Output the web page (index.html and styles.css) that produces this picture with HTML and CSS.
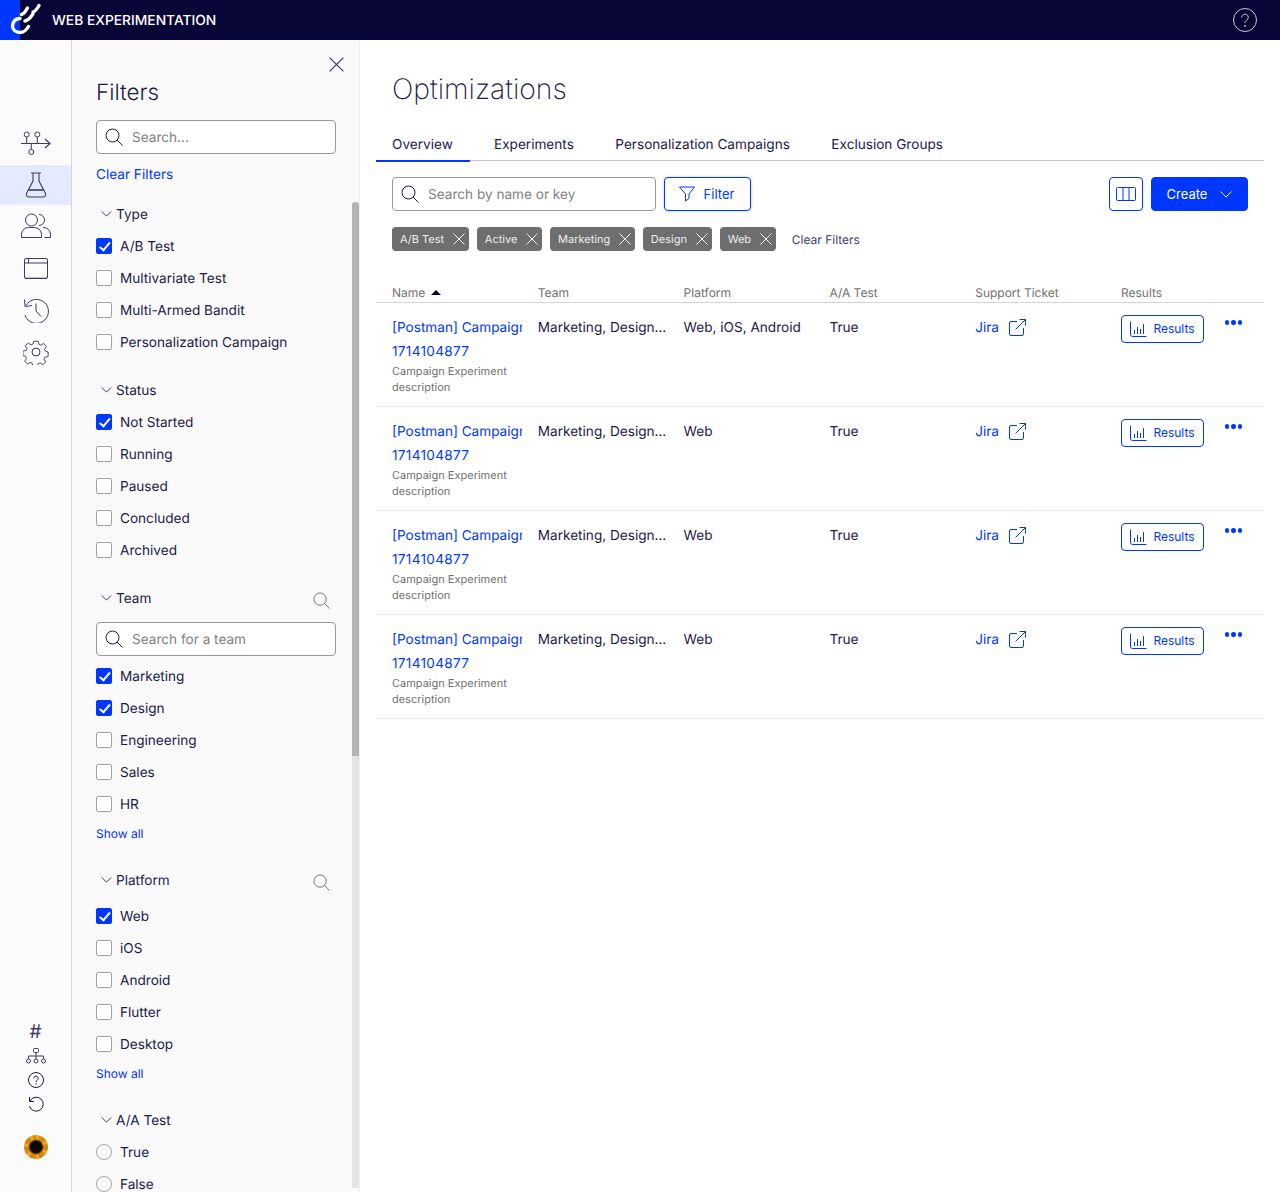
FILE: index.html
```html
<!DOCTYPE html>
<html lang="en">
<head>
  <meta charset="UTF-8">
  <title>Optimizations</title>
  <link rel="stylesheet" href="styles.css">
</head>
<body>
  <svg class="sprites" width="0" height="0">
    <symbol id="i-search" viewBox="0 0 18 18"><circle cx="7.5" cy="7.5" r="6.5" fill="none" stroke="currentColor"/><path d="M12 12l5.5 5.5" fill="none" stroke="currentColor"/></symbol>
    <symbol id="i-x" viewBox="0 0 12 12"><path d="M.5.5l11 11M11.5.5l-11 11" fill="none" stroke="currentColor"/></symbol>
    <symbol id="i-chev" viewBox="0 0 12 7"><path d="M.5.5L6 6l5.5-5.5" fill="none" stroke="currentColor"/></symbol>
    <symbol id="i-ext" viewBox="0 0 17 17"><path d="M8 2.5H2A1.5 1.5 0 0 0 .5 4v11A1.5 1.5 0 0 0 2 16.500h11a1.500 1.500 0 0 0 1.500-1.500V9M6.500 10.500L16.500.5M10.500.5h6v6" fill="none" stroke="currentColor"/></symbol>
    <symbol id="i-chart" viewBox="0 0 17 16"><path d="M.5.5v13a2 2 0 0 0 2 2h14M4.500 9v4M7.500 6v7M10.500 8v5M13.500 3v10" fill="none" stroke="currentColor"/></symbol>
  </svg>

  <header class="topbar">
    <div class="logo-tile"></div>
    <svg class="logo" width="48" height="40" viewBox="0 0 48 40"><g fill="none" stroke="#fff" stroke-linecap="round" stroke-width="3.400"><path d="M20 18.500C14.500 18.500 12.500 23 12.500 26c0 4 3.500 6.500 7.500 6.500 4.500 0 7-3.500 8.500-6"/><path d="M21.500 14.500C25 13.500 26 10 27.500 8"/><path d="M25 21c4-.5 6-4.500 8-7"/><path d="M33 12c3-1 4.500-4 6-6.500"/></g></svg>
    <span class="product-name">WEB EXPERIMENTATION</span>
    <svg class="topbar-help" width="24" height="24" viewBox="0 0 24 24"><circle cx="12" cy="12" r="11.500" fill="none" stroke="#c9c9d4"/><path d="M8.700 9.500a3.300 3.300 0 1 1 5 2.800c-1 .7-1.700 1.300-1.700 2.700" fill="none" stroke="#c9c9d4"/><circle cx="12" cy="18" r=".9" fill="#c9c9d4"/></svg>
  </header>

  <div class="shell">
    <nav class="rail">
      <div class="rail-top">
        <a class="rail-item">
          <svg width="30" height="26" viewBox="0 0 30 26"><g fill="none" stroke="#3c3b63"><path d="M0 12.500h29M24 8l5 4.500-5 4.500" stroke-width="1.200"/><circle cx="5.700" cy="3.500" r="2.500"/><circle cx="16.300" cy="3.500" r="2.500"/><circle cx="10.300" cy="21" r="2.500"/><path d="M5.700 6v6.500M16.300 6v6.500M10.300 12.500v6"/></g></svg>
        </a>
        <a class="rail-item is-active">
          <svg width="22" height="26" viewBox="0 0 22 26"><g fill="none" stroke="#3c3b63" stroke-width="1.100"><path d="M6 1h10M8 1v8L1.500 21.500A2.500 2.500 0 0 0 4 25h14a2.500 2.500 0 0 0 2.500-3.500L14 9V1"/><path d="M3.500 18h15" stroke-width="1.600"/></g></svg>
        </a>
        <a class="rail-item">
          <svg width="30" height="26" viewBox="0 0 30 26"><g fill="none" stroke="#3c3b63"><circle cx="10.500" cy="7" r="6"/><path d="M.5 24.500v-3a7 7 0 0 1 7-7h6a7 7 0 0 1 7 7v3z"/><path d="M18 1.500a5.500 5.500 0 0 1 0 11M22 14.500a7 7 0 0 1 7.500 7v3h-6"/></g></svg>
        </a>
        <a class="rail-item">
          <svg width="24" height="22" viewBox="0 -1 24 22"><g fill="none" stroke="#3c3b63"><rect x=".5" y=".5" width="23" height="20" rx="1.500"/><path d="M.5 5h23M4.500.5V5"/><path d="M1 20.500h22" stroke-width="1.600"/></g></svg>
        </a>
        <a class="rail-item">
          <svg width="26" height="26" viewBox="0 0 26 26"><g fill="none" stroke="#3c3b63"><path d="M3 8.500A12 12 0 1 1 2 18"/><path d="M1.500 2.500l.5 7 7-1"/><path d="M13 6.500V14l5 5.500"/></g></svg>
        </a>
        <a class="rail-item">
          <svg width="26" height="26" viewBox="0 0 26 26"><g fill="none" stroke="#3c3b63"><circle cx="13" cy="13" r="4"/><path d="M10.500 1h5l.7 3.500 2.300 1 3-2 3 3.500-2 3 1 2.300 3 .7v5l-3.500.7-1 2.300 2 3-3.500 3-3-2-2.300 1-.7 3h-5l-.7-3.500-2.300-1-3 2-3-3.500 2-3-1-2.300-3-.7v-5l3.500-.7 1-2.300-2-3 3.500-3 3 2 2.300-1z" transform="translate(1.300 1.300) scale(.9)"/></g></svg>
        </a>
      </div>
      <div class="rail-bottom">
        <span class="rail-hash">#</span>
        <svg width="20" height="16" viewBox="0 0 20 16"><g fill="none" stroke="#3c3b63"><rect x="7.500" y=".5" width="5" height="4" rx="1"/><path d="M10 4.500V8M2.500 11V8h15v3M10 8v3"/><circle cx="2.500" cy="13" r="2"/><circle cx="10" cy="13" r="2"/><circle cx="17.500" cy="13" r="2"/></g></svg>
        <svg width="16" height="16" viewBox="0 0 16 16"><circle cx="8" cy="8" r="7.500" fill="none" stroke="#1b1a48"/><path d="M5.800 6.300a2.200 2.200 0 1 1 3.400 1.900c-.8.500-1.200.9-1.200 1.900" fill="none" stroke="#1b1a48"/><circle cx="8" cy="12" r=".7" fill="#1b1a48"/></svg>
        <svg width="16" height="16" viewBox="0 0 16 16"><path d="M2 5a7 7 0 1 1-.5 5M1.500 1v4.500H6" fill="none" stroke="#1b1a48"/></svg>
        <div class="avatar"></div>
      </div>
    </nav>

    <aside class="filters">
      <svg class="filters-close"><use href="#i-x"/></svg>
      <h2 class="filters-title">Filters</h2>
      <div class="search-box"><svg class="search-icon"><use href="#i-search"/></svg><span>Search...</span></div>
      <a class="clear-link">Clear Filters</a>

      <section class="group">
        <h3 class="group-head"><svg class="chev"><use href="#i-chev"/></svg>Type</h3>
        <label class="opt"><i class="check on"></i>A/B Test</label>
        <label class="opt"><i class="check"></i>Multivariate Test</label>
        <label class="opt"><i class="check"></i>Multi-Armed Bandit</label>
        <label class="opt"><i class="check"></i>Personalization Campaign</label>
      </section>

      <section class="group">
        <h3 class="group-head"><svg class="chev"><use href="#i-chev"/></svg>Status</h3>
        <label class="opt"><i class="check on"></i>Not Started</label>
        <label class="opt"><i class="check"></i>Running</label>
        <label class="opt"><i class="check"></i>Paused</label>
        <label class="opt"><i class="check"></i>Concluded</label>
        <label class="opt"><i class="check"></i>Archived</label>
      </section>

      <section class="group">
        <h3 class="group-head"><svg class="chev"><use href="#i-chev"/></svg>Team<svg class="head-search"><use href="#i-search"/></svg></h3>
        <div class="search-box team-search"><svg class="search-icon"><use href="#i-search"/></svg><span>Search for a team</span></div>
        <label class="opt"><i class="check on"></i>Marketing</label>
        <label class="opt"><i class="check on"></i>Design</label>
        <label class="opt"><i class="check"></i>Engineering</label>
        <label class="opt"><i class="check"></i>Sales</label>
        <label class="opt"><i class="check"></i>HR</label>
        <a class="show-all">Show all</a>
      </section>

      <section class="group group-wide">
        <h3 class="group-head"><svg class="chev"><use href="#i-chev"/></svg>Platform<svg class="head-search"><use href="#i-search"/></svg></h3>
        <label class="opt"><i class="check on"></i>Web</label>
        <label class="opt"><i class="check"></i>iOS</label>
        <label class="opt"><i class="check"></i>Android</label>
        <label class="opt"><i class="check"></i>Flutter</label>
        <label class="opt"><i class="check"></i>Desktop</label>
        <a class="show-all">Show all</a>
      </section>

      <section class="group group-aa">
        <h3 class="group-head"><svg class="chev"><use href="#i-chev"/></svg>A/A Test</h3>
        <label class="opt"><i class="radio"></i>True</label>
        <label class="opt"><i class="radio"></i>False</label>
      </section>

      <div class="scroll-track"></div>
      <div class="scroll-thumb"></div>
    </aside>

    <main class="content">
      <h1 class="page-title">Optimizations</h1>
      <div class="tabs">
        <a class="tab is-active">Overview</a>
        <a class="tab">Experiments</a>
        <a class="tab">Personalization Campaigns</a>
        <a class="tab">Exclusion Groups</a>
      </div>

      <div class="toolbar">
        <div class="search-box main-search"><svg class="search-icon"><use href="#i-search"/></svg><span>Search by name or key</span></div>
        <button class="btn btn-filter">
          <svg width="16" height="16" viewBox="0 0 16 16"><path d="M.5 1h15L10 8v4.500L6.500 15V8z" fill="none" stroke="currentColor"/></svg>
          Filter
        </button>
        <button class="btn btn-columns">
          <svg width="20" height="14" viewBox="0 0 20 14"><path d="M1.500.5h17a1 1 0 0 1 1 1v11a1 1 0 0 1-1 1h-17a1 1 0 0 1-1-1v-11a1 1 0 0 1 1-1zM7 .5v13M13 .5v13" fill="none" stroke="currentColor"/></svg>
        </button>
        <button class="btn btn-create">Create<svg class="create-chev"><use href="#i-chev"/></svg></button>
      </div>

      <div class="chips">
        <span class="chip">A/B Test<svg><use href="#i-x"/></svg></span>
        <span class="chip">Active<svg><use href="#i-x"/></svg></span>
        <span class="chip">Marketing<svg><use href="#i-x"/></svg></span>
        <span class="chip">Design<svg><use href="#i-x"/></svg></span>
        <span class="chip">Web<svg><use href="#i-x"/></svg></span>
        <a class="chips-clear">Clear Filters</a>
      </div>

      <div class="table">
        <div class="row head-row">
          <div class="name-head">Name<i class="sort-up"></i></div>
          <div>Team</div>
          <div>Platform</div>
          <div>A/A Test</div>
          <div>Support Ticket</div>
          <div>Results</div>
        </div>

        <div class="row">
          <div class="cell-name"><a class="exp-link">[Postman] Campaign</a><a class="exp-key">1714104877</a><p class="exp-desc">Campaign Experiment description</p></div>
          <div>Marketing, Design...</div>
          <div>Web, iOS, Android</div>
          <div>True</div>
          <div><a class="jira">Jira<svg><use href="#i-ext"/></svg></a></div>
          <div class="cell-results"><button class="btn-results"><svg><use href="#i-chart"/></svg>Results</button><span class="dots"><i></i><i></i><i></i></span></div>
        </div>

        <div class="row">
          <div class="cell-name"><a class="exp-link">[Postman] Campaign</a><a class="exp-key">1714104877</a><p class="exp-desc">Campaign Experiment description</p></div>
          <div>Marketing, Design...</div>
          <div>Web</div>
          <div>True</div>
          <div><a class="jira">Jira<svg><use href="#i-ext"/></svg></a></div>
          <div class="cell-results"><button class="btn-results"><svg><use href="#i-chart"/></svg>Results</button><span class="dots"><i></i><i></i><i></i></span></div>
        </div>

        <div class="row">
          <div class="cell-name"><a class="exp-link">[Postman] Campaign</a><a class="exp-key">1714104877</a><p class="exp-desc">Campaign Experiment description</p></div>
          <div>Marketing, Design...</div>
          <div>Web</div>
          <div>True</div>
          <div><a class="jira">Jira<svg><use href="#i-ext"/></svg></a></div>
          <div class="cell-results"><button class="btn-results"><svg><use href="#i-chart"/></svg>Results</button><span class="dots"><i></i><i></i><i></i></span></div>
        </div>

        <div class="row">
          <div class="cell-name"><a class="exp-link">[Postman] Campaign</a><a class="exp-key">1714104877</a><p class="exp-desc">Campaign Experiment description</p></div>
          <div>Marketing, Design...</div>
          <div>Web</div>
          <div>True</div>
          <div><a class="jira">Jira<svg><use href="#i-ext"/></svg></a></div>
          <div class="cell-results"><button class="btn-results"><svg><use href="#i-chart"/></svg>Results</button><span class="dots"><i></i><i></i><i></i></span></div>
        </div>
      </div>
    </main>
  </div>
</body>
</html>
```

FILE: styles.css
```css
html, body {
  height: 100%;
  margin: 0;
  overflow: hidden;
}
body {
  font-family: Inter, "Liberation Sans", sans-serif;
  font-size: 13.6px;
  color: #1b1a48;
  background: #fff;
  text-rendering: geometricPrecision;
}
.sprites {
  position: absolute;
}

/* Top bar */
.topbar {
  display: flex;
  align-items: center;
  height: 40px;
  background: #080636;
  position: relative;
}
.logo-tile {
  width: 20px;
  height: 40px;
  background: #0037ff;
}
.logo {
  position: absolute;
  left: 0;
  top: 0;
}
.product-name {
  margin-left: 32px;
  padding-top: 2px;
  color: #fff;
  font-size: 13.8px;
  font-weight: 500;
}
.topbar-help {
  margin-left: auto;
  margin-right: 23px;
}

.shell {
  display: flex;
  height: 1152px;
}

/* Icon rail */
.rail {
  width: 71px;
  flex: none;
  display: flex;
  flex-direction: column;
  justify-content: space-between;
  background: #fbfbfb;
  border-right: 1px solid #d6d6d6;
  padding: 83px 0 33px;
  box-sizing: content-box;
  height: 1036px;
}
.rail-top {
  display: flex;
  flex-direction: column;
}
.rail-item {
  height: 42px;
  display: flex;
  align-items: center;
  justify-content: center;
}
.rail-item.is-active {
  background: #e4eaff;
  height: 40px;
}
.rail-bottom {
  display: flex;
  flex-direction: column;
  align-items: center;
  gap: 8px;
}
.rail-hash {
  font-size: 19px;
  line-height: 16px;
  color: #3c3b63;
}
.avatar {
  width: 24px;
  height: 24px;
  margin-top: 15px;
  border-radius: 50%;
  background:
    radial-gradient(closest-side, #0d0a05 0 46%, #5c3206 54%, transparent 66%),
    repeating-conic-gradient(#f6a314 0 18deg, #e08a10 18deg 36deg, #b98a20 36deg 54deg);
}

/* Filters panel */
.filters {
  width: 288px;
  flex: none;
  position: relative;
  background: #fafafa;
  border-right: 1px solid #efefef;
  padding: 39px 24px 0;
  box-sizing: border-box;
  overflow: hidden;
}
.filters-close {
  position: absolute;
  right: 15px;
  top: 17px;
  width: 15px;
  height: 15px;
  color: #3c3b63;
}
.filters-title {
  margin: 0;
  font-size: 22.4px;
  line-height: 28px;
  font-weight: 300;
  color: #1b1a48;
}
.search-box {
  display: flex;
  align-items: center;
  gap: 9px;
  width: 240px;
  height: 34px;
  padding-left: 8px;
  box-sizing: border-box;
  background: #fff;
  border: 1px solid #999;
  border-radius: 4px;
  color: #7f7f7f;
}
.search-box span {
  padding-top: 2px;
}
.filters .search-box {
  margin-top: 13px;
}
.search-icon {
  width: 18px;
  height: 18px;
  color: #1b1a48;
  flex: none;
}
.clear-link {
  display: block;
  margin-top: 13px;
  line-height: 17px;
  color: #0037ff;
}
.group {
  margin-top: 20px;
}
.clear-link + .group {
  margin-top: 18px;
}
.group-wide, .group-aa {
  margin-top: 26px;
}
.group-head {
  display: flex;
  align-items: center;
  height: 24px;
  margin: 0 0 4px;
  font-size: 13.6px;
  font-weight: 400;
  position: relative;
  padding: 2px 0 0 20px;
  box-sizing: border-box;
}
.chev {
  position: absolute;
  left: 5px;
  top: 9px;
  width: 11px;
  height: 6px;
}
.head-search {
  position: absolute;
  right: 5px;
  top: 6px;
  width: 17px;
  height: 17px;
  color: #707070;
}
.opt {
  display: flex;
  align-items: center;
  gap: 8px;
  height: 32px;
  padding-top: 2px;
  box-sizing: border-box;
}
.check, .radio {
  width: 16px;
  height: 16px;
  margin-top: -2px;
  flex: none;
  box-sizing: border-box;
  background: #fff;
  border: 1px solid #a3a3a3;
  border-radius: 2px;
  position: relative;
}
.radio {
  border-radius: 50%;
}
.check.on {
  background: #0037ff;
  border-color: #0037ff;
}
.check.on::after {
  content: "";
  position: absolute;
  left: 4.500px;
  top: 1px;
  width: 4px;
  height: 8.500px;
  border: solid #fff;
  border-width: 0 2px 2px 0;
  transform: rotate(40deg);
}
.filters .team-search {
  margin: 12px 0 4px;
}
.show-all {
  display: block;
  margin-top: 6px;
  font-size: 12px;
  line-height: 16px;
  color: #0037ff;
}
.group-wide .group-head {
  margin-bottom: 8px;
}
.scroll-track {
  position: absolute;
  right: 0;
  top: 700px;
  bottom: 4px;
  width: 7px;
  background: #e4e4e4;
}
.scroll-thumb {
  position: absolute;
  right: 0;
  top: 162px;
  width: 7px;
  height: 554px;
  background: #b4b4b4;
  border-radius: 3px 3px 0 0;
}

/* Main content */
.content {
  flex: 1;
  padding: 31px 16px 0;
  min-width: 0;
}
.page-title {
  margin: 0 0 0 16px;
  font-size: 28.3px;
  line-height: 36px;
  font-weight: 200;
  color: #1b1a48;
}
.tabs {
  display: flex;
  margin-top: 21px;
  height: 32px;
  border-bottom: 1px solid #c8c8c8;
}
.tab {
  padding: 0 16px;
  margin-right: 9.500px;
  line-height: 34px;
  box-sizing: border-box;
  height: 34px;
}
.tab.is-active {
  border-bottom: 2px solid #0037ff;
  width: 94px;
  margin-right: 8px;
}
.toolbar {
  display: flex;
  align-items: center;
  gap: 8px;
  margin: 16px 16px 0;
}
.main-search {
  width: 264px;
}
.btn {
  height: 34px;
  box-sizing: border-box;
  display: inline-flex;
  align-items: center;
  justify-content: center;
  border: 1px solid #0037ff;
  border-radius: 4px;
  background: #fff;
  color: #0037ff;
  font: inherit;
  font-size: 13px;
  padding: 0;
}
.btn-filter {
  width: 87px;
  gap: 9px;
  padding-right: 2px;
  box-shadow: 0 0 3px rgba(0, 55, 255, .25);
}
.btn-columns {
  width: 34px;
  margin-left: auto;
}
.btn-create {
  width: 97px;
  background: #0037ff;
  color: #fff;
  gap: 13px;
}
.create-chev {
  width: 12px;
  height: 7px;
}
.chips {
  display: flex;
  align-items: center;
  gap: 8px;
  margin: 16px 16px 0;
}
.chip {
  display: inline-flex;
  align-items: center;
  gap: 8.700px;
  height: 24px;
  padding: 0 4px 0 8px;
  background: #6e6e6e;
  color: #eee;
  border-radius: 4px;
  font-size: 11px;
}
.chip svg {
  width: 12px;
  height: 12px;
  color: #fff;
}
.chips-clear {
  margin-left: 8px;
  font-size: 12px;
  color: #43425f;
}
.table {
  margin-top: 33px;
}
.row {
  display: grid;
  grid-template-columns: repeat(6, 145.800px);
  padding-left: 16px;
  height: 104px;
  box-sizing: border-box;
  padding-top: 13px;
  line-height: 24px;
  border-bottom: 1px solid #e8e8e8;
}
.head-row {
  height: 19px;
  padding-top: 0;
  line-height: 18px;
  font-size: 12px;
  color: #707070;
  border-bottom-color: #d4d4d4;
}
.name-head {
  display: flex;
  align-items: center;
  gap: 6px;
}
.sort-up {
  width: 0;
  height: 0;
  margin-bottom: 2px;
  border: 5.500px solid transparent;
  border-top: 0;
  border-bottom: 5px solid #080636;
}
.cell-name {
  width: 130px;
  overflow: hidden;
}
.exp-link {
  display: block;
  white-space: nowrap;
  overflow: hidden;
  color: #0037ff;
}
.exp-key {
  display: block;
  letter-spacing: .3px;
  color: #0037ff;
}
.exp-desc {
  margin: -1px 0 0;
  font-size: 11px;
  line-height: 16px;
  color: #707070;
}
.jira {
  display: inline-flex;
  align-items: center;
  gap: 10px;
  color: #0037ff;
}
.jira svg {
  width: 17px;
  height: 17px;
  margin-top: -2px;
}
.cell-results {
  position: relative;
  margin-top: -1px;
}
.btn-results {
  display: inline-flex;
  align-items: center;
  justify-content: center;
  gap: 6px;
  width: 83px;
  height: 28px;
  box-sizing: border-box;
  padding: 0;
  background: #fff;
  border: 1px solid #0037ff;
  border-radius: 4px;
  color: #0037ff;
  font: inherit;
  font-size: 12px;
}
.btn-results svg {
  width: 17px;
  height: 16px;
}
.dots {
  position: absolute;
  left: 104px;
  top: 5px;
  display: flex;
  gap: 2px;
}
.dots i {
  width: 4.500px;
  height: 4.500px;
  border-radius: 50%;
  background: #0037ff;
}
```
